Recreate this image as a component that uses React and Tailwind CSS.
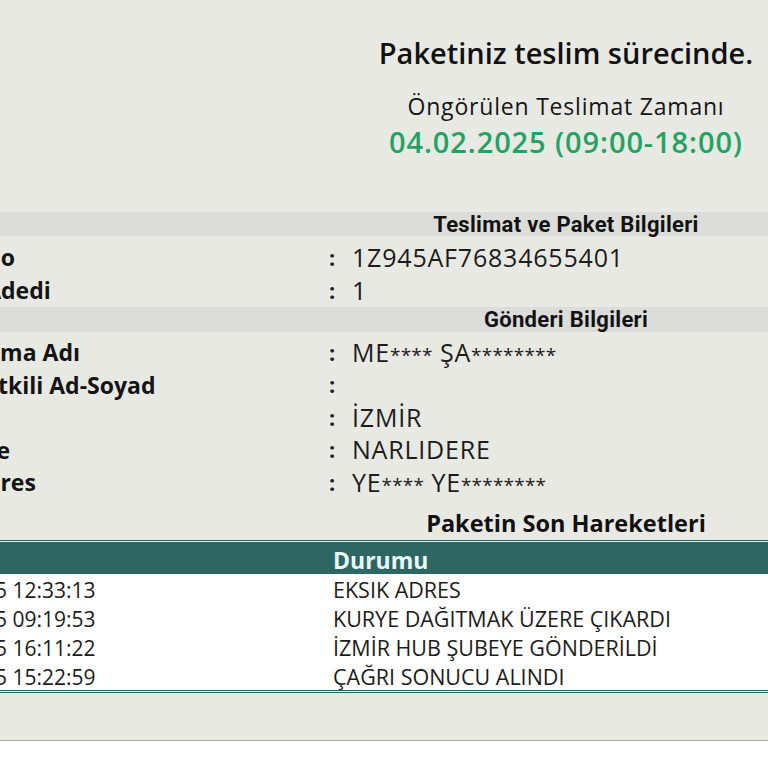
import React from 'react'

const paket = [
  { label: 'Takip No', value: '1Z945AF76834655401' },
  { label: 'Paket Adedi', value: '1' },
]

const gonderi = [
  { label: 'Firma Adı', value: 'ME**** ŞA********' },
  { label: 'Yetkili Ad-Soyad', value: '' },
  { label: 'İl', value: 'İZMİR' },
  { label: 'İlçe', value: 'NARLIDERE' },
  { label: 'Adres', value: 'YE**** YE********' },
]

const hareketler = [
  { tarih: '03.02.2025 12:33:13', durum: 'EKSIK ADRES' },
  { tarih: '03.02.2025 09:19:53', durum: 'KURYE DAĞITMAK ÜZERE ÇIKARDI' },
  { tarih: '01.02.2025 16:11:22', durum: 'İZMİR HUB ŞUBEYE GÖNDERİLDİ' },
  { tarih: '31.01.2025 15:22:59', durum: 'ÇAĞRI SONUCU ALINDI' },
]

// maskelenmiş kısımlardaki yıldızlar daha küçük görünüyor
function Masked({ text }) {
  return text.split(/(\*+)/).map((part, i) =>
    part.startsWith('*') ? (
      <span key={i} className="text-[19px] tracking-[0.2px]">{part}</span>
    ) : (
      <span key={i}>{part}</span>
    )
  )
}

function Row({ label, value, pad, h }) {
  return (
    <div className={`flex items-center ${h}`}>
      <div className={`w-[429px] shrink-0 font-bold text-[23px] text-[#141414] whitespace-nowrap ${pad}`}>{label}</div>
      <div className="w-[23px] shrink-0 text-[22px] font-bold text-[#222]">:</div>
      <div className="text-[25px] text-[#1c1c1c] tracking-[0.8px] whitespace-nowrap">
        <Masked text={value} />
      </div>
    </div>
  )
}

export default function App() {
  return (
    <div className="w-[768px] h-[768px] overflow-hidden bg-white font-['Open_Sans','Noto_Sans',sans-serif]">
      <div className="bg-[#e9e9e4] h-[741px] border-b border-[#a9a9a2]">
        <div className="w-[1332px] ml-[-100px]">
          {/* Üst durum */}
          <div className="pt-[36px] text-center">
            <h1 className="text-[29px] leading-[34px] font-semibold text-[#111]">Paketiniz teslim sürecinde.</h1>
            <p className="mt-[22px] text-[23px] leading-[28px] font-medium text-[#151515] tracking-[0.8px]">Öngörülen Teslimat Zamanı</p>
            <p className="mt-[5px] text-[29px] leading-[34px] font-semibold text-[#1fa463] tracking-[0.9px]">04.02.2025 (09:00-18:00)</p>
          </div>

          {/* Teslimat ve Paket */}
          <div className="mt-[53px]">
            <div className="h-[24px] bg-[#dcdcda] flex items-center justify-center font-['Roboto',sans-serif] font-bold text-[22px] tracking-[0.3px] text-[#121212]">
              Teslimat ve Paket Bilgileri
            </div>
            <div className="pt-[5px]">
              {paket.map(r => (
                <Row key={r.label} {...r} pad="pl-[13px]" h="h-[33px]" />
              ))}
            </div>
            <div className="h-[25px] bg-[#dcdcda] flex items-center justify-center font-['Roboto',sans-serif] font-bold text-[22px] tracking-[0.3px] text-[#121212]">
              Gönderi Bilgileri
            </div>
            <div className="pt-[4px]">
              {gonderi.map(r => (
                <Row key={r.label} {...r} pad="pl-[70px]" h="h-[32.5px]" />
              ))}
            </div>
          </div>

          {/* Hareketler */}
          <h2 className="mt-[10px] text-center text-[23.5px] leading-[28px] font-bold text-[#111]">Paketin Son Hareketleri</h2>
          <div className="mt-[3px] border-t border-[#2f6664]">
            <div className="border-t border-[#dff1ee] flex h-[33px] pt-[5px] items-center bg-[#2f6664] text-[23px] font-bold text-[#e8faf6]">
              <div className="w-[433px] shrink-0">Tarih</div>
              <div>Durumu</div>
            </div>
            <div className="bg-white text-[21.5px] text-[#1c1c1c]">
              {hareketler.map(h => (
                <div key={h.tarih} className="flex h-[29px] pt-[5px] items-center whitespace-nowrap">
                  <div className="w-[433px] shrink-0 text-[21px]">{h.tarih}</div>
                  <div>{h.durum}</div>
                </div>
              ))}
            </div>
            <div className="h-[1px] bg-[#2f6664]" />
            <div className="h-[1px] bg-[#dff1ee]" />
            <div className="h-[1px] bg-[#2f6664]" />
          </div>
        </div>
      </div>
    </div>
  )
}
